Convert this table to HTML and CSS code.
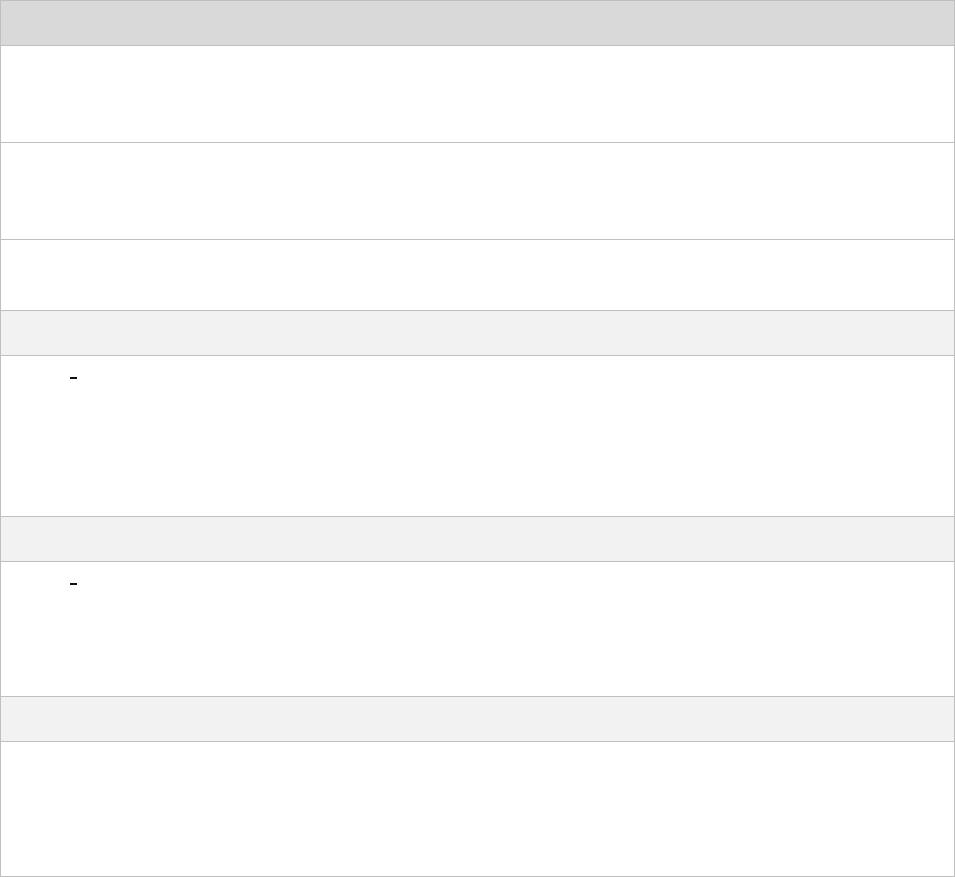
FILE: index.html
```html
<!DOCTYPE html>
<html>
<head>
<meta charset="utf-8">
<link rel="stylesheet" href="styles.css">
</head>
<body>
<div class="table">
  <div class="row head"></div>
  <div class="row h96"></div>
  <div class="row h96"></div>
  <div class="row h70"></div>
  <div class="row group"></div>
  <div class="row h160"><span class="dash"></span></div>
  <div class="row group"></div>
  <div class="row h134"><span class="dash"></span></div>
  <div class="row group"></div>
  <div class="row h134 last"></div>
</div>
</body>
</html>
```
FILE: styles.css
```css
html, body {
  margin: 0;
  padding: 0;
  background: #ffffff;
  font-family: "Liberation Sans", Arial, sans-serif;
}
.table {
  width: 955px;
  box-sizing: border-box;
  border: 1px solid #bfbfbf;
  display: flex;
  flex-direction: column;
}
.row {
  border-bottom: 1px solid #bfbfbf;
  background: #ffffff;
  box-sizing: content-box;
  display: flex;
  align-items: flex-start;
}
.row.last {
  border-bottom: none;
}
.head {
  height: 44px;
  background: #d9d9d9;
}
.group {
  height: 44px;
  background: #f2f2f2;
}
.h96 { height: 96px; }
.h70 { height: 70px; }
.h160 { height: 160px; }
.h134 { height: 134px; }
.dash {
  display: block;
  width: 7px;
  height: 2px;
  margin: 21px 0 0 69px;
  background: #111111;
}
```
